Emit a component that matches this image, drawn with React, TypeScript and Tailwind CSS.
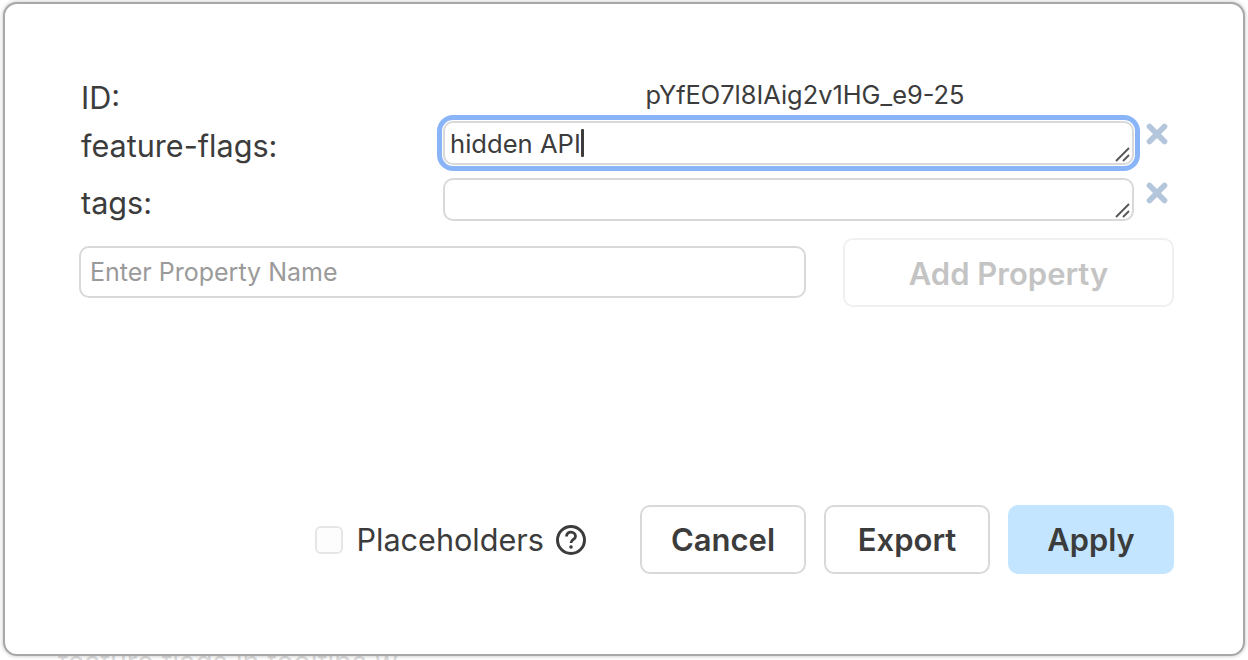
import { X } from 'lucide-react';

function Grip() {
  return (
    <svg width="16" height="16" viewBox="0 0 16 16" className="absolute right-[1px] bottom-[1px] text-[#555555]">
      <path d="M1 15 L14 2 M8 15 L14 9" stroke="currentColor" strokeWidth="1.8" fill="none" />
    </svg>
  );
}

function PropertyRow({ label, value, focused }: { label: string; value?: string; focused?: boolean }) {
  return (
    <div className="flex items-start">
      <div className={`w-[362px] text-[30.6px] leading-[36px] ${focused ? 'pt-[7px]' : 'pt-[7px]'}`}>{label}</div>
      <div
        className={`relative w-[691px] rounded-[10px] border-2 border-[#d9d9d9] pl-[5px] text-[25.6px] ${
          focused ? 'h-[44px] leading-[42px] outline-[5px] outline-[#8ab4f8] outline-offset-[1px]' : 'h-[43px] leading-[38px]'
        }`}
      >
        {value}
        {focused && <span className="inline-block align-[-4px] w-[3px] h-[28px] bg-[#3c3c3c] rounded-[1px]" />}
        <Grip />
      </div>
      <X size={30} strokeWidth={4.5} className={`ml-[8px] text-[#b4c6dc] ${focused ? '-mt-[2px]' : 'mt-0'}`} />
    </div>
  );
}

export default function App() {
  return (
    <div className="relative h-[660px] w-[1248px] overflow-hidden bg-white font-['Inter',sans-serif] text-[#3c3c3c]">
      <div className="pl-[58px] pt-[645px] text-[28.5px] leading-[34px] text-[#dcdcdc]">feature flags in tooltips w</div>
      <div className="absolute left-[3px] top-[2px] flex h-[654px] w-[1242px] flex-col rounded-[14px] border-2 border-[#a8a8a8] bg-white pl-[76px] pr-[69px] pt-[74px] shadow-[0_0_4px_rgba(0,0,0,0.25)]">
        <div className="flex items-center h-[42px]">
          <div className="w-[362px] -mt-[2px] text-[30.6px] leading-[36px]">ID:</div>
          <div className="w-[692px] pl-[32px] text-center text-[25.4px] leading-[30px] -mt-[8px]">pYfEO7l8IAig2v1HG_e9-25</div>
        </div>
        <div className="mt-[1px]">
          <PropertyRow label="feature-flags:" value="hidden API" focused />
        </div>
        <div className="mt-[13px]">
          <PropertyRow label="tags:" />
        </div>
        <div className="mt-[25px] flex items-start">
          <input
            readOnly
            placeholder="Enter Property Name"
            className="-ml-[2px] h-[52px] w-[727px] rounded-[10px] border-2 border-[#d9d9d9] px-[9px] text-[25px] outline-none placeholder:text-[#9a9a9a]"
          />
          <button className="ml-[37px] -mt-[8px] h-[69px] w-[331px] rounded-[10px] border-2 border-[#f0f0f0] pt-[3px] text-[31px] font-semibold text-[#c4c4c4]">
            Add Property
          </button>
        </div>
        <div className="mt-auto mb-[80px] flex items-center justify-end">
          <div className="mr-[13px] h-[28px] w-[28px] rounded-[6px] border-2 border-[#e6e6e6] bg-[#fdfdfd]" />
          <span className="text-[30.6px] leading-[36px]">Placeholders</span>
          <svg width="32" height="32" viewBox="0 0 32 32" className="ml-[11px]" fill="none">
            <circle cx="16" cy="16" r="13.5" stroke="#3c3c3c" strokeWidth="3" />
            <path d="M11.5 12.5 C11.5 6.5 20.5 7 20.5 12.5 C20.5 15.5 16 15.5 16 19" stroke="#3c3c3c" strokeWidth="2.8" />
            <circle cx="16" cy="23" r="1.8" fill="#3c3c3c" />
          </svg>
          <button className="ml-[53px] h-[69px] w-[166px] rounded-[10px] border-2 border-[#d9d9d9] pt-[2px] text-[31px] font-semibold">Cancel</button>
          <button className="ml-[18px] h-[69px] w-[166px] rounded-[10px] border-2 border-[#d9d9d9] pt-[2px] text-[31px] font-semibold">Export</button>
          <button className="ml-[18px] h-[69px] w-[166px] rounded-[10px] bg-[#c3e5ff] pt-[2px] text-[30.8px] font-semibold">Apply</button>
        </div>
      </div>
    </div>
  );
}
